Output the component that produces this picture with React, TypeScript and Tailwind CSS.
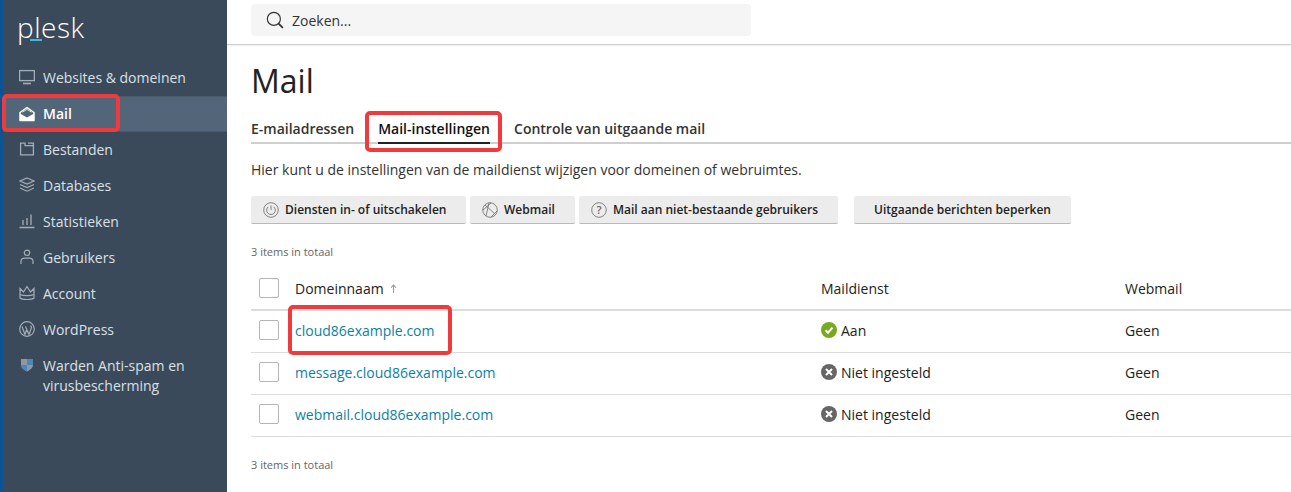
import React from "react";

const Ic = ({ children, className = "" }: { children: React.ReactNode; className?: string }) => (
  <svg viewBox="0 0 16 16" width="16" height="16" fill="none" stroke="currentColor" strokeWidth="1.2" className={"shrink-0 " + className}>
    {children}
  </svg>
);

const nav: [string, React.ReactNode][] = [
  ["Websites & domeinen", <Ic><rect x="0.6" y="1.6" width="14.8" height="10" strokeWidth="1.3" /><path d="M4 14.5h8" strokeWidth="1.6" /></Ic>],
  ["Mail", <Ic><path d="M1 6.5 8 1.5l7 5v8H1z" stroke="#fff" strokeWidth="1.5" strokeLinejoin="round" /><path d="M1 7.5 8 11.5l7-4v7.5H1z" fill="#fff" stroke="none" /><path d="M3.5 6.2 8 3.4l4.5 2.8" stroke="#fff" strokeWidth="0.8" /></Ic>],
  ["Bestanden", <Ic><path d="M1.6 2.2h4.4v2.4h8.4v9.2H1.6z" strokeWidth="1.3" /><path d="M9 2.2h5.4v2.4" strokeWidth="1.3" /></Ic>],
  ["Databases", <Ic><path d="M8 1 15 4 8 7 1 4z" /><path d="M1 7.5 8 10.5l7-3M1 11l7 3.2 7-3.2" /></Ic>],
  ["Statistieken", <Ic><path d="M0.5 14.5h15M4 12V7M8 12V5M12 12V1.5" strokeWidth="1.3" /></Ic>],
  ["Gebruikers", <Ic><circle cx="8" cy="3.8" r="2.7" /><path d="M2 15v-2.5c0-2 1.5-3.3 3.5-3.3h5c2 0 3.5 1.3 3.5 3.3V15" /></Ic>],
  ["Account", <Ic><path d="M1 3.5 4.5 7 8 1.5 11.5 7 15 3.5V13c-2 2-12 2-14 0z" /><path d="M1 9.5c3 1.5 11 1.5 14 0" /></Ic>],
  ["WordPress", <Ic><circle cx="8" cy="8" r="7.3" /><path d="M3 5.5 6 13.5 8 7.5M6.5 5.5 10 13.5 12.3 7c.4-1.2-.2-2-1-2.2" /></Ic>],
];

const btn = "flex h-7 items-center rounded-[2px] bg-[#ececec] border-b border-[#b9b9b9] text-[12px] font-semibold text-[#222] whitespace-nowrap";

const BtnIcon = ({ children }: { children: React.ReactNode }) => (
  <svg viewBox="0 0 16 16" width="16" height="16" fill="none" stroke="#777" strokeWidth="0.9" className="mr-[6px] shrink-0">
    <circle cx="8" cy="8" r="7.3" />
    {children}
  </svg>
);

const Check = () => <span className="flex h-5 w-5 rounded-[2px] border border-[#b5b5b5] bg-white" />;

const rows: [string, boolean][] = [
  ["cloud86example.com", true],
  ["message.cloud86example.com", false],
  ["webmail.cloud86example.com", false],
];

const Row = ({ name, on }: { name: string; on: boolean }) => (
  <div className="flex h-[42px] items-center border-b border-[#dcdcdc] pb-[3px]">
    <div className="flex w-11 pl-2"><Check /></div>
    <a className="w-[526px] text-[#0b7fa8]">{name}</a>
    <div className="flex w-[304px] items-center gap-[4px]">
      {on ? (
        <svg viewBox="0 0 16 16" width="16" height="16"><circle cx="8" cy="8" r="8" fill="#79a91e" /><path d="M4.5 8.2 7 10.7l4.5-5" fill="none" stroke="#fff" strokeWidth="2" /></svg>
      ) : (
        <svg viewBox="0 0 16 16" width="16" height="16"><circle cx="8" cy="8" r="8" fill="#666" /><path d="m5 5 6 6M11 5l-6 6" fill="none" stroke="#fff" strokeWidth="2" /></svg>
      )}
      <span>{on ? "Aan" : "Niet ingesteld"}</span>
    </div>
    <div>Geen</div>
  </div>
);

const Mark = ({ className }: { className: string }) => (
  <div className={"absolute rounded-[5px] border-4 border-[#ef3b3d] " + className} />
);

export default function App() {
  return (
    <div className="relative flex h-[492px] w-[1291px] overflow-hidden bg-white text-[14px] text-[#222]" style={{ fontFamily: '"Open Sans", sans-serif' }}>
      <aside className="w-[227px] shrink-0 border-l-[3px] border-[#0b5394] bg-[#3b4a5a] text-[14px] text-[#d9e0e6]">
        <div className="flex h-[59px] items-start pl-[14px] pt-[9px]">
          <div className="relative text-[28px] font-light leading-[36px] tracking-[0.5px] text-white">
            plesk
            <span className="absolute left-[13px] top-[30px] h-[2px] w-[12px] bg-[#3eb7e4]" />
          </div>
        </div>
        <nav>
          {nav.map(([label, icon]) => (
            <div key={label} className={"flex h-9 items-center gap-[8px] pl-[16px] " + (label === "Mail" ? "mt-px -mb-px border-y border-[#4a5b6c] bg-[#536679] pb-px font-semibold text-white" : "")}>
              <span className={label === "Mail" ? "text-white" : "text-[#a4adb6]"}>{icon}</span>
              {label}
            </div>
          ))}
          <div className="flex items-start gap-[8px] pl-[16px] pt-[9px] leading-[20px]">
            <svg viewBox="0 0 16 16" width="16" height="16" className="mt-[1px] shrink-0">
              <path d="M2 2h12v6c0 3-3 5-6 6.5C5 13 2 11 2 8z" fill="#8d98a3" />
              <path d="M8 2h6v6H8z" fill="#4f86b8" />
              <path d="M2 8h6v6.5C5 13 2 11 2 8z" fill="#4f86b8" />
            </svg>
            <span>Warden Anti-spam en<br />virusbescherming</span>
          </div>
        </nav>
      </aside>

      <main className="min-w-0 flex-1">
        <header className="h-[45px] border-b border-[#cfcfcf] pl-[24px] pt-1 shadow-[0_1px_1px_rgba(0,0,0,0.05)]">
          <div className="flex h-8 w-[500px] items-center gap-2 rounded-[4px] bg-[#f5f5f5] pl-[15px]">
            <svg viewBox="0 0 16 16" width="18" height="18" fill="none" stroke="#333" strokeWidth="1">
              <circle cx="7" cy="7" r="5.8" />
              <path d="m11.2 11.2 3.8 3.8" strokeWidth="1.6" />
            </svg>
            <span className="text-[#333]">Zoeken...</span>
          </div>
        </header>

        <div className="pl-[24px]">
          <h1 className="mt-[14px] text-[32px] leading-[44px] text-[#222]">Mail</h1>

          <div className="mt-[15px] flex h-[26px] items-start border-b-2 border-[#cfcfcf] text-[14px] font-semibold leading-[22px]">
            <span className="text-[#333]">E-mailadressen</span>
            <span className="ml-6 h-[26px] border-b-2 border-[#222] text-[#111]">Mail-instellingen</span>
            <span className="ml-6 text-[#333]">Controle van uitgaande mail</span>
          </div>

          <p className="mt-[15px] leading-[22px] text-[#333]">Hier kunt u de instellingen van de maildienst wijzigen voor domeinen of webruimtes.</p>

          <div className="mt-[15px] flex items-center">
            <div className={btn + " w-[215px] pl-[12px]"}>
              <BtnIcon><path d="M8 3.5v4.5" /><path d="M5.3 4.9a4.3 4.3 0 1 0 5.4 0" /></BtnIcon>
              Diensten in- of uitschakelen
            </div>
            <div className={btn + " ml-1 w-[105px] pl-[12px]"}>
              <BtnIcon><path d="M3 3l10 9M1 8l8-7M4 14l3-13M9 15l6-6" /></BtnIcon>
              Webmail
            </div>
            <div className={btn + " ml-1 w-[259px] pl-[12px]"}>
              <svg viewBox="0 0 16 16" width="16" height="16" className="mr-[6px] shrink-0">
                <circle cx="8" cy="8" r="7.3" fill="none" stroke="#777" strokeWidth="0.9" />
                <text x="8" y="12" textAnchor="middle" fontSize="11" fill="#666">?</text>
              </svg>
              Mail aan niet-bestaande gebruikers
            </div>
            <div className={btn + " ml-4 w-[217px] justify-center"}>Uitgaande berichten beperken</div>
          </div>

          <div className="mt-[20px] text-[11px] leading-[16px] text-[#666]">3 items in totaal</div>

          <div className="mt-[7px] flex h-[44px] items-center border-b-2 border-[#dcdcdc]">
            <div className="flex w-11 pl-2"><Check /></div>
            <div className="flex w-[526px] items-center gap-[6px]">
              Domeinnaam
              <svg viewBox="0 0 8 10" width="7" height="9" fill="none" stroke="#999" strokeWidth="1.2"><path d="M4 10V1M1.2 4 4 1l2.8 3" /></svg>
            </div>
            <div className="w-[304px]">Maildienst</div>
            <div>Webmail</div>
          </div>

          {rows.map(([n, on]) => <Row key={n} name={n} on={on} />)}

          <div className="mt-[20px] text-[11px] leading-[16px] text-[#666]">3 items in totaal</div>
        </div>
      </main>

      <Mark className="left-[2px] top-[94px] h-[38px] w-[118px]" />
      <Mark className="left-[365px] top-[111px] h-[41px] w-[137px]" />
      <Mark className="left-[288px] top-[305px] h-[50px] w-[164px]" />
    </div>
  );
}
